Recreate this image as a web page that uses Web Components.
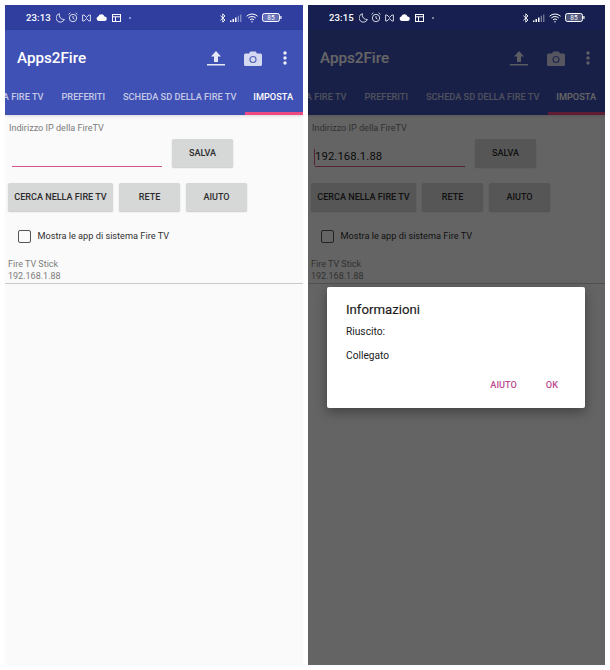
<!DOCTYPE html>
<html lang="it"><head><meta charset="utf-8"><title>Apps2Fire</title>
<style>
html,body{margin:0;background:#fff}
body{display:flex;gap:5px;padding:5px 0 0 5px;width:605px;height:665px;box-sizing:border-box;font-family:Roboto,"Liberation Sans",sans-serif;overflow:hidden}
</style></head><body>
<phone-screen time="23:13"></phone-screen>
<phone-screen time="23:15" ip="192.168.1.88" dimmed>
  <info-dialog slot="overlay" heading="Informazioni">
    <p>Riuscito:</p><p>Collegato</p>
  </info-dialog>
</phone-screen>
<template id="status-tpl">
<style>
:host{display:flex;align-items:center;height:25px;background:#303f9f;color:#fff;padding:0 21px 0 21px;box-sizing:border-box}
.time{font:500 9.6px Roboto,sans-serif;width:30px;letter-spacing:.1px}
svg{display:block;flex:none}
.left,.right{display:flex;align-items:center}
.spacer{flex:1}
</style>
<span class="time"></span>
<div class="left">
<svg width="9" height="10" viewBox="0 0 9 10" fill="none" stroke="#fff" stroke-width=".8"><path d="M3.4.7A4.3 4.3 0 1 0 8.4 6.5 4.6 4.6 0 0 1 3.4.7Z"/></svg>
<svg style="margin-left:3px" width="10" height="11" viewBox="0 0 10 11" fill="none" stroke="#fff" stroke-width=".8"><circle cx="5" cy="6" r="3.7"/><path d="M5 4v2.2l1.4 1M.6 2.4 2.4.8M9.4 2.4 7.6.8"/></svg>
<svg style="margin-left:4px" width="9" height="8" viewBox="0 0 9 8" fill="none" stroke="#fff" stroke-width=".8"><path d="M.6 1h1.4l2.5 2.4L7 1h1.4v6H7L4.500 4.600 2 7H.6Z"/></svg>
<svg style="margin-left:5px" width="11" height="7" viewBox="0 0 11 7" fill="#fff"><path d="M2.600 7a2.300 2.300 0 0 1-.3-4.500A3.300 3.300 0 0 1 8.500 2.400 2.300 2.300 0 0 1 8.500 7Z"/></svg>
<svg style="margin-left:5px" width="9" height="8" viewBox="0 0 9 8" fill="none" stroke="#fff" stroke-width="1"><rect x=".5" y=".5" width="8" height="7"/><path d="M.5 2.800h8M3.500 2.800v4.700"/></svg>
<svg style="margin-left:8px" width="2" height="2" viewBox="0 0 2 2" fill="#fff"><circle cx="1" cy="1" r=".8"/></svg>
</div>
<span class="spacer"></span>
<div class="right">
<svg width="6" height="10" viewBox="0 0 6 10" fill="none" stroke="#fff" stroke-width=".9"><path d="M.4 2.700 5 7 2.800 9.200V.8L5 3 .4 7.300"/></svg>
<svg style="margin-left:4px" width="12" height="8" viewBox="0 0 12 8" fill="#fff"><path d="M0 6.500h1.500V8H0zM2.500 5H4v3H2.500zM5 3.500h1.500V8H5z"/><path opacity=".55" d="M7.800 1.800h1V8h-1zM10.300.5h1V8h-1z"/></svg>
<svg style="margin-left:4px" width="13" height="10" viewBox="0 0 13 10" fill="none" stroke="#fff" stroke-width="1"><path d="M.6 3.200a8 8 0 0 1 11 0M2.300 5a5.500 5.500 0 0 1 7.500 0M4 6.800a3 3 0 0 1 4.100 0"/><circle cx="6" cy="8.800" r=".7" fill="#fff" stroke="none"/></svg>
<svg style="margin-left:3px" width="20" height="9" viewBox="0 0 20 9"><rect x=".5" y=".5" width="17" height="8" rx="2" fill="rgba(255,255,255,.25)" stroke="#fff"/><rect x="18.300" y="3" width="1.200" height="3" fill="#fff"/><text x="9" y="7" text-anchor="middle" font-family="Roboto,sans-serif" font-size="6.500" fill="#fff">85</text></svg>
</div>
</template>
<template id="tabs-tpl">
<style>
:host{display:flex;justify-content:flex-end;height:37px;font:500 9.2px Roboto,sans-serif;color:rgba(255,255,255,.7);white-space:nowrap}
.tab{flex:none;padding:0 9px;line-height:37px;height:37px;box-sizing:border-box}
.tab:first-child{padding-left:0;letter-spacing:-.3px}
.on{color:#fff;padding:0 10px 0 8px;border-bottom:3px solid #ec4a82}
</style>
<span class="tab">A FIRE TV</span><span class="tab">PREFERITI</span><span class="tab">SCHEDA SD DELLA FIRE TV</span><span class="tab on">IMPOSTA</span>
</template>
<template id="btn-tpl">
<style>
:host{display:flex;align-items:center;justify-content:center;height:28px;box-sizing:border-box;background:#d6d7d7;border-radius:1.5px;box-shadow:0 1px 1.500px rgba(0,0,0,.2);font:500 9.05px Roboto,sans-serif;color:#2c2c2c;white-space:nowrap}
</style><slot></slot>
</template>
<template id="dialog-tpl">
<style>
:host{position:absolute;left:19px;top:282px;width:258px;height:121px;box-sizing:border-box;background:#fff;border-radius:2px;box-shadow:0 4px 12px rgba(0,0,0,.35);padding:15px 19px 0;color:#212121;display:flex;flex-direction:column}
h2{margin:0;font:400 13.200px/16px Roboto,sans-serif;color:#1a1a1a;-webkit-text-stroke:.15px #1a1a1a}
.msg{margin-top:8px;flex:none}
::slotted(p){margin:0 0 12px;font:400 10.200px/12px Roboto,sans-serif}
.actions{display:flex;justify-content:flex-end;gap:29px;margin:auto 8px 17px 0;font:500 9.200px/12px Roboto,sans-serif;color:#bd4a90}
</style>
<h2></h2><div class="msg"><slot></slot></div>
<div class="actions"><span>AIUTO</span><span>OK</span></div>
</template>
<template id="phone-tpl">
<style>
:host{display:flex;flex-direction:column;position:relative;width:298px;height:660px;background:#fafafa;overflow:hidden;flex:none}
.appbar{background:#3f51b5;box-shadow:0 1px 3px rgba(0,0,0,.15)}
.bar{display:flex;align-items:center;height:48px;padding:8px 0 0 12px;box-sizing:border-box;color:#fff}
.title{font:500 15.200px Roboto,sans-serif;flex:1}
.bar svg{display:block;flex:none}
.body{padding:6px 0 0 3px;display:flex;flex-direction:column;flex:1}
.label{font:400 9.100px/14px Roboto,sans-serif;color:#7c7c7c;margin-left:1px;height:14px}
.ip-row{display:flex;margin-top:4px;align-items:flex-start}
.field{width:150px;height:26px;margin-left:4px;border-bottom:1.500px solid #d3558f;font:400 11.300px/16px Roboto,sans-serif;color:#1c1c1c;display:flex;align-items:flex-end;padding-bottom:1px;letter-spacing:.1px}
.field span{border-left:1px solid #d3558f;margin-left:-1px;height:16px;display:block}
.save{margin-left:10px;width:61px}
.row{display:flex;gap:6px;margin-top:16px}
.check{display:flex;align-items:center;margin:18px 0 0 10px;font:400 9.200px/14px Roboto,sans-serif;color:#303030}
.box{width:11px;height:11px;border:1.500px solid #555;border-radius:2px;margin-right:6.500px;flex:none}
.device{margin:15px 0 0;font:400 9px/12px Roboto,sans-serif;color:#7c7c7c}
hr{margin:1px 0 0 -3px;border:0;border-top:1px solid #c9c9c9;width:298px}
.scrim{display:none;position:absolute;inset:0;background:rgba(0,0,0,.6)}
:host([dimmed]) .scrim{display:block}
:host([dimmed]) status-bar{position:relative;z-index:1;background:#161f50}
</style>
<status-bar></status-bar>
<div class="appbar">
<div class="bar"><span class="title">Apps2Fire</span>
<svg width="18" height="16" viewBox="0 0 18 16" fill="#e6e8f6"><path d="M9 1 14 6.500H11V12H7V6.500H4Z"/><rect y="14" width="18" height="1.500"/></svg>
<svg style="margin-left:19px" width="18" height="15" viewBox="0 0 18 15"><path fill="#d4d8f0" d="M1.500 2.500H5L6.300 .5h5.400L13 2.500h3.500A1.500 1.500 0 0 1 18 4v9.500a1.500 1.500 0 0 1-1.500 1.500h-15A1.500 1.500 0 0 1 0 13.500V4a1.500 1.500 0 0 1 1.500-1.500Z"/><circle cx="9" cy="8.500" r="3.600" fill="#5463ba"/><circle cx="9" cy="8.500" r="2.400" fill="#d4d8f0"/></svg>
<svg style="margin:0 16px 0 21px" width="4" height="14" viewBox="0 0 4 14" fill="#eceefa"><circle cx="2" cy="2" r="1.700"/><circle cx="2" cy="7" r="1.700"/><circle cx="2" cy="12" r="1.700"/></svg>
</div>
<tab-strip></tab-strip>
</div>
<div class="body">
<div class="label">Indirizzo IP della FireTV</div>
<div class="ip-row"><div class="field"></div><soft-button class="save">SALVA</soft-button></div>
<div class="row"><soft-button style="width:105px">CERCA NELLA FIRE TV</soft-button><soft-button style="width:61px">RETE</soft-button><soft-button style="width:61px">AIUTO</soft-button></div>
<div class="check"><span class="box"></span>Mostra le app di sistema Fire TV</div>
<div class="device">Fire TV Stick<br>192.168.1.88</div>
<hr>
</div>
<div class="scrim"></div>
<slot name="overlay"></slot>
</template>
<script>
const tpl=id=>document.getElementById(id).content.cloneNode(true);
class Base extends HTMLElement{constructor(id){super();this.attachShadow({mode:'open'}).appendChild(tpl(id));}}
customElements.define('status-bar',class extends Base{constructor(){super('status-tpl')}
  set time(v){this.shadowRoot.querySelector('.time').textContent=v}});
customElements.define('tab-strip',class extends Base{constructor(){super('tabs-tpl')}});
customElements.define('soft-button',class extends Base{constructor(){super('btn-tpl')}});
customElements.define('info-dialog',class extends Base{constructor(){super('dialog-tpl')}
  connectedCallback(){this.shadowRoot.querySelector('h2').textContent=this.getAttribute('heading')}});
customElements.define('phone-screen',class extends Base{constructor(){super('phone-tpl')}
  connectedCallback(){const r=this.shadowRoot;r.querySelector('status-bar').time=this.getAttribute('time');
    const ip=this.getAttribute('ip');if(ip){const s=document.createElement('span');s.textContent=ip;r.querySelector('.field').appendChild(s)}}});
</script>
</body></html>
